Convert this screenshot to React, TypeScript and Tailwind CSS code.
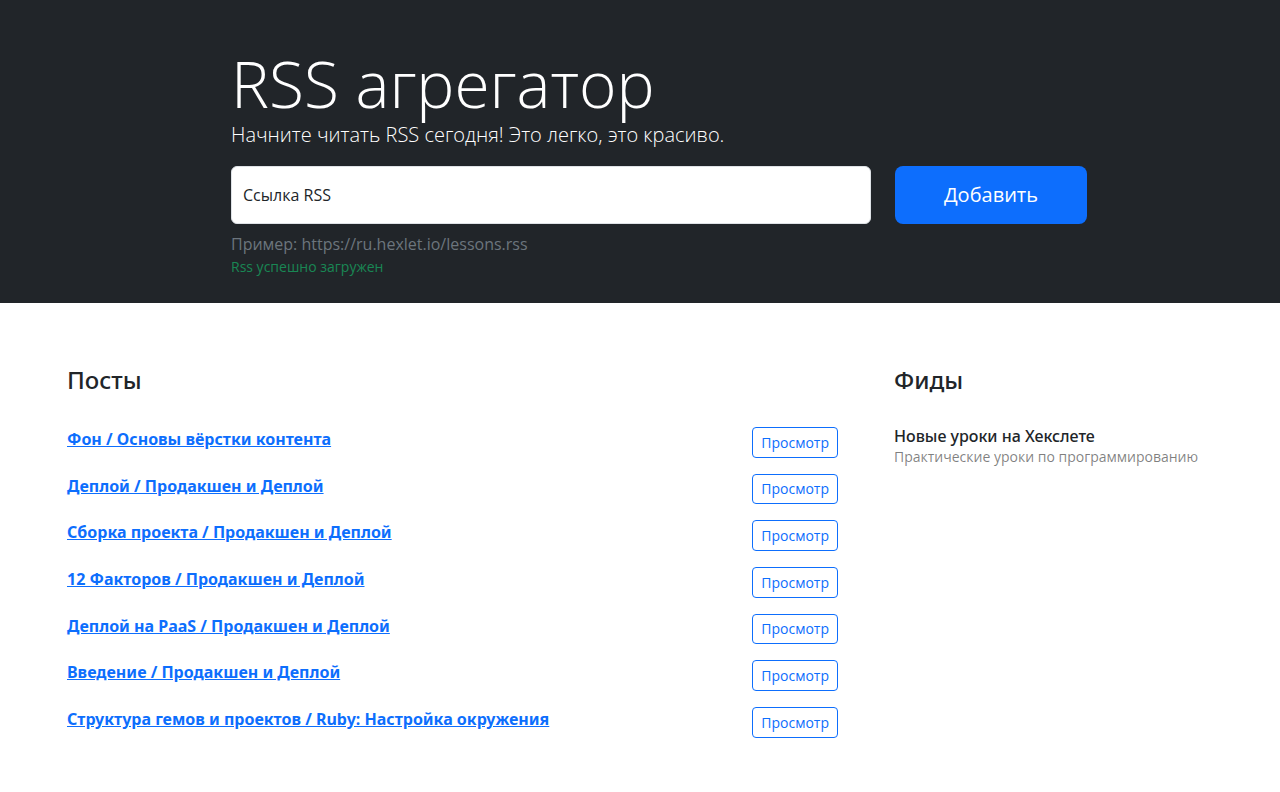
import React from "react";

const posts = [
  "Фон / Основы вёрстки контента",
  "Деплой / Продакшен и Деплой",
  "Сборка проекта / Продакшен и Деплой",
  "12 Факторов / Продакшен и Деплой",
  "Деплой на PaaS / Продакшен и Деплой",
  "Введение / Продакшен и Деплой",
  "Структура гемов и проектов / Ruby: Настройка окружения",
];

const noto = { fontFamily: '"Noto Sans", "Open Sans", sans-serif' };

export default function App() {
  return (
    <div
      className="min-h-[792px] bg-white text-[#212529]"
      style={{ fontFamily: '"Open Sans", "Noto Sans", sans-serif' }}
    >
      <section className="bg-[#212529] pt-[47px] pb-[47px]">
        <div className="relative ml-[231px] w-[856px] text-white">
          <h1 className="text-[64px] font-light leading-[73px]">RSS агрегатор</h1>
          <p className="text-[20px] font-light leading-[30px]">
            Начните читать RSS сегодня! Это легко, это красиво.
          </p>
          <form className="mt-[16px] flex gap-6" onSubmit={(e) => e.preventDefault()}>
            <div className="relative flex-1">
              <input
                aria-label="url"
                className="h-[58px] w-full rounded-[6px] border border-[#dee2e6] bg-white px-3 text-base text-[#212529] outline-none"
              />
              <label className="pointer-events-none absolute left-[12px] top-0 flex h-[58px] items-center text-base text-[#212529]">
                Ссылка RSS
              </label>
            </div>
            <button
              type="submit"
              className="h-[58px] w-[192px] rounded-[8px] bg-[#0d6efd] text-[20px] text-white"
            >
              Добавить
            </button>
          </form>
          <p className="mt-2 text-base leading-6 text-[#6c757d]">
            Пример: https://ru.hexlet.io/lessons.rss
          </p>
          <p className="absolute left-0 top-full text-[14px] leading-[21px] text-[#198754]">
            Rss успешно загружен
          </p>
        </div>
      </section>

      <section className="flex gap-[24px] pt-[46px] pl-[51px] pr-[51px]">
        <div className="w-[803px]">
          <div className="p-4">
            <h2 className="mb-[9px] text-[24px] font-medium leading-[29px]" style={noto}>
              Посты
            </h2>
          </div>
          <ul>
            {posts.map((p) => (
              <li key={p} className="flex items-start justify-between px-4 py-2">
                <a
                  href="#"
                  className="text-base font-bold leading-6 text-[#0d6efd] underline"
                  style={noto}
                >
                  {p}
                </a>
                <button className="flex h-[30.67px] items-center rounded-[4px] border border-[#0d6efd] px-2 text-[14px] leading-[21px] text-[#0d6efd]">
                  Просмотр
                </button>
              </li>
            ))}
          </ul>
        </div>
        <div className="flex-1">
          <div className="p-4">
            <h2 className="mb-[9px] text-[24px] font-medium leading-[29px]" style={noto}>
              Фиды
            </h2>
          </div>
          <ul>
            <li className="px-4 py-2">
              <h3 className="text-base font-medium leading-[19px]" style={noto}>
                Новые уроки на Хекслете
              </h3>
              <p className="text-[14px] leading-[21px] text-black/50">
                Практические уроки по программированию
              </p>
            </li>
          </ul>
        </div>
      </section>
    </div>
  );
}
